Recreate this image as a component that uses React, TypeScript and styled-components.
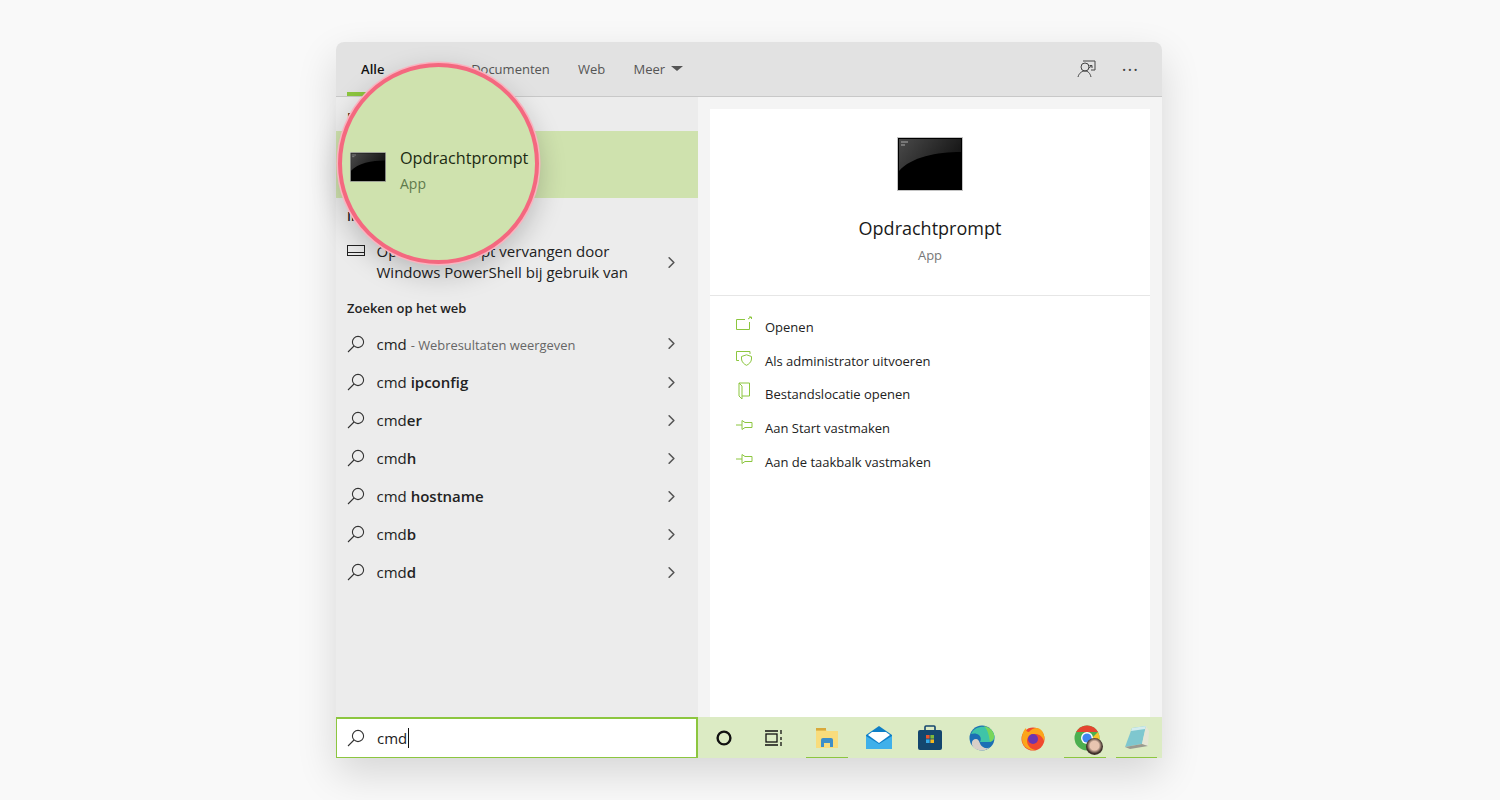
import styled, { createGlobalStyle } from "styled-components";
import { ChevronRight } from "lucide-react";

const Global = createGlobalStyle`
  html, body { margin: 0; height: 100%; background: #f9f9f9; }
  body { font-family: "Open Sans", "Noto Sans", sans-serif; color: #1c1c1c; }
`;

const SearchGlass = ({ size = 18 }: { size?: number }) => (
  <svg width={size} height={size} viewBox="0 0 18 18" fill="none" stroke="#333" strokeWidth="1.1">
    <circle cx="11" cy="7" r="5.6" />
    <path d="M7 11 L1 17" />
  </svg>
);

const Cmd = ({ w, h, id }: { w: number; h: number; id: string }) => (
  <svg width={w} height={h} viewBox="0 0 66 54">
    <defs>
      <linearGradient id={id} x1="0" y1="0" x2="1" y2="0.4">
        <stop offset="0" stopColor="#4a4a4a" />
        <stop offset="1" stopColor="#161616" />
      </linearGradient>
    </defs>
    <rect x="0.5" y="0.5" width="65" height="53" fill="#000" stroke="#c4c4c4" />
    <path d="M2 2 H64 V15 C40 15 14 20 2 34 Z" fill={`url(#${id})`} />
    <path d="M4 5 H11 M4 8 H8" stroke="#aaa" strokeWidth="1" />
  </svg>
);

const green = "#8cc63f";

const OpenIcon = () => (
  <svg width="18" height="16" viewBox="0 0 18 16" fill="none" stroke={green} strokeWidth="1">
    <path d="M10 3.5 H1.5 V13.5 H14.5 V6" />
    <path d="M13 3 L16 1 M14 1 H16.5 V3" />
  </svg>
);
const ShieldIcon = () => (
  <svg width="18" height="16" viewBox="0 0 18 16" fill="none" stroke={green} strokeWidth="1">
    <path d="M4 10.5 H1.5 V1.5 H15 V4" />
    <path d="M6.500 6.500 L11.500 4.800 L16.500 6.500 V9 C16.500 12 13.500 14.500 11.500 15.300 C9.500 14.500 6.500 12 6.500 9 Z" />
  </svg>
);
const FolderIcon = () => (
  <svg width="18" height="18" viewBox="0 0 18 18" fill="none" stroke={green} strokeWidth="1">
    <path d="M4 1 H14.5 V14 H7" />
    <path d="M4 1 L7 4 V17 L4 14 Z" />
  </svg>
);
const PinIcon = () => (
  <svg width="18" height="12" viewBox="0 0 18 12" fill="none" stroke={green} strokeWidth="1">
    <path d="M1 6 H7" />
    <path d="M7 1.5 V10.5 L10 8.5 H17 V3.5 H10 Z" />
  </svg>
);

const results = [
  { plain: "cmd", bold: " ipconfig" },
  { plain: "cmd", bold: "er" },
  { plain: "cmd", bold: "h" },
  { plain: "cmd", bold: " hostname" },
  { plain: "cmd", bold: "b" },
  { plain: "cmd", bold: "d" },
];

const actions = [
  { icon: <OpenIcon />, label: "Openen" },
  { icon: <ShieldIcon />, label: "Als administrator uitvoeren" },
  { icon: <FolderIcon />, label: "Bestandslocatie openen" },
  { icon: <PinIcon />, label: "Aan Start vastmaken" },
  { icon: <PinIcon />, label: "Aan de taakbalk vastmaken" },
];

const App = () => {
  return (
    <Page>
      <Global />
      <Win>
        <TabBar>
          <Tabs>
            <Tab $active>Alle</Tab>
            <Tab>Apps</Tab>
            <Tab>Documenten</Tab>
            <Tab>Web</Tab>
            <Tab>
              Meer <Caret />
            </Tab>
          </Tabs>
          <TabTools>
            <svg width="20" height="20" viewBox="0 0 20 20" fill="none" stroke="#444" strokeWidth="1">
              <path d="M6 2 H18 V11 H14" />
              <circle cx="8" cy="8" r="4" />
              <path d="M1 18 C2 14 5 12 8 12 C11 12 13 14 14 18" />
              <path d="M12 9 L15 6.5 M15 9 V6.5 H12.5" />
            </svg>
            <Dots>···</Dots>
          </TabTools>
        </TabBar>
        <Body>
          <Left>
            <SectionHead>Beste overeenkomst</SectionHead>
            <BestMatch />
            <SettingsHead>Instellingen</SettingsHead>
            <SettingRow>
              <IconSlot>
                <svg width="18" height="12" viewBox="0 0 18 12" fill="none" stroke="#222" strokeWidth="1">
                  <rect x="0.5" y="0.5" width="17" height="10" />
                  <path d="M0.5 7.5 H17.5" />
                </svg>
              </IconSlot>
              <SettingText>
                Opdrachtprompt vervangen door
                <br />
                Windows PowerShell bij gebruik van
              </SettingText>
              <Arrow size={19} strokeWidth={2} />
            </SettingRow>
            <WebHead>Zoeken op het web</WebHead>
            <FirstWebRow>
              <IconSlot>
                <SearchGlass />
              </IconSlot>
              <RowLabel>
                cmd <Hint>- Webresultaten weergeven</Hint>
              </RowLabel>
              <Arrow size={19} strokeWidth={2} />
            </FirstWebRow>
            {results.map((r) => (
              <WebRow key={r.plain + r.bold}>
                <IconSlot>
                  <SearchGlass />
                </IconSlot>
                <RowLabel>
                  {r.plain}
                  <b>{r.bold}</b>
                </RowLabel>
                <Arrow size={19} strokeWidth={2} />
              </WebRow>
            ))}
          </Left>
          <Right>
            <Detail>
              <DetailTop>
                <Cmd w={66} h={54} id="cmd-large" />
                <DetailTitle>Opdrachtprompt</DetailTitle>
                <DetailSub>App</DetailSub>
              </DetailTop>
              <ActionList>
                {actions.map((a) => (
                  <Action key={a.label}>
                    <ActionIcon>{a.icon}</ActionIcon>
                    {a.label}
                  </Action>
                ))}
              </ActionList>
            </Detail>
          </Right>
        </Body>
        <Bottom>
          <SearchBox>
            <IconSlot>
              <SearchGlass />
            </IconSlot>
            <SearchText>cmd</SearchText>
            <CaretLine />
          </SearchBox>
          <Taskbar>
            <TaskItem>
              <svg width="18" height="18" viewBox="0 0 18 18" fill="none" stroke="#111" strokeWidth="2.4">
                <circle cx="9" cy="9" r="6.4" />
              </svg>
            </TaskItem>
            <TaskItem>
              <svg width="24" height="18" viewBox="0 0 24 18" fill="none" stroke="#111" strokeWidth="1.3">
                <rect x="3" y="5" width="11" height="8" />
                <path d="M2 2 H15 M2 16 H15" />
                <path d="M18 1 V5 M18 8 V11 M18 13 V17" />
              </svg>
            </TaskItem>
            <TaskItem $running>
              <svg width="24" height="22" viewBox="0 0 24 22">
                <path d="M1 2 H10 L12 4 H23 V21 H1 Z" fill="#f8dc7c" />
                <rect x="1" y="1" width="10" height="2.6" fill="#d9a93a" />
                <path d="M6 20 V13 Q6 11 8 11 H16 Q18 11 18 13 V20 H15 V16 H9 V20 Z" fill="#3d8fc9" />
              </svg>
            </TaskItem>
            <TaskItem>
              <svg width="26" height="24" viewBox="0 0 26 24">
                <path d="M0 9 L13 0 L26 9 V23 H0 Z" fill="#0f7fc6" />
                <path d="M2 9 L13 17 L24 9 L20 6 H6 Z" fill="#fff" />
                <path d="M0 10 L13 18 L26 10 V23 H0 Z" fill="#3fb0ea" />
              </svg>
            </TaskItem>
            <TaskItem>
              <svg width="26" height="26" viewBox="0 0 26 26">
                <path d="M8 5 V2 Q8 1 9 1 H17 Q18 1 18 2 V5" fill="none" stroke="#14466e" strokeWidth="1.6" />
                <rect x="1" y="5" width="24" height="20" rx="2" fill="#14466e" />
                <rect x="9" y="10" width="3.6" height="3.6" fill="#e8552d" />
                <rect x="13.4" y="10" width="3.6" height="3.6" fill="#7fb93a" />
                <rect x="9" y="14.4" width="3.6" height="3.6" fill="#35a8e6" />
                <rect x="13.4" y="14.4" width="3.6" height="3.6" fill="#f4b81f" />
              </svg>
            </TaskItem>
            <TaskItem>
              <svg width="26" height="26" viewBox="0 0 26 26">
                <circle cx="13" cy="13" r="12.5" fill="#1c6fb4" />
                <path d="M2 9 C6 0 21 -1 25 9 C26.500 14 24 17 19 17 H11 C14 11 8 7 2 9 Z" fill="#3fc4a8" />
                <path d="M15 1 C20 2 24 5 25 10 C25.500 13 24 16 21 17 C20 11 19 5 15 1 Z" fill="#79d65a" />
                <path d="M5 23 C1 19 3 14 7 14 C11 14 10 20 14 22 C17 24 20 23 21 22 C16 27 9 26 5 23 Z" fill="#d8cfc8" />
              </svg>
            </TaskItem>
            <TaskItem>
              <svg width="26" height="26" viewBox="0 0 26 26">
                <circle cx="13" cy="14" r="11.5" fill="#f0492f" />
                <path d="M2 14 C2 8 4 5 6 3 C6 6 7 7 9 7 C12 3 17 2 20 4 C24 7 25 12 24 16 C22 10 18 9 15 9 C10 9 7 12 7 16 C7 21 12 25 16 25 C8 26 2 21 2 14 Z" fill="#fba51a" />
                <circle cx="13" cy="14" r="5" fill="#6a36b0" />
              </svg>
            </TaskItem>
            <TaskItem $running>
              <ChromeWrap>
                <svg width="26" height="26" viewBox="0 0 26 26">
                  <circle cx="13" cy="13" r="12.5" fill="#4caf50" />
                  <path d="M13 .5 A12.5 12.5 0 0 1 24 7 H13 Z M2.2 7 A12.5 12.5 0 0 1 13 .5 V7 Z" fill="#e5442f" />
                  <path d="M24 7 A12.5 12.5 0 0 1 13 25.5 L18 13 Z" fill="#f6c42c" />
                  <circle cx="13" cy="13" r="6" fill="#fff" />
                  <circle cx="13" cy="13" r="4.6" fill="#3f85f0" />
                </svg>
                <Avatar />
              </ChromeWrap>
            </TaskItem>
            <TaskItem $running>
              <svg width="26" height="26" viewBox="0 0 26 26">
                <path d="M8 3 L22 1 L18 19 L1 22 Z" fill="#7fc7cf" />
                <path d="M8 3 L22 1 L21 4 L7 6 Z" fill="#d4ecee" />
                <path d="M22 1 L25 6 L24 21 L18 19 Z" fill="#e6e6d6" />
                <path d="M1 22 L18 19 L24 21 L6 24 Z" fill="#9a9a90" />
              </svg>
            </TaskItem>
          </Taskbar>
        </Bottom>
        <Lens>
          <LensIcon>
            <Cmd w={36} h={30} id="cmd-small" />
          </LensIcon>
          <LensText>
            <LensTitle>Opdrachtprompt</LensTitle>
            <LensSub>App</LensSub>
          </LensText>
        </Lens>
      </Win>
    </Page>
  );
};

const Page = styled.div`
  width: 1500px;
  height: 800px;
  padding-top: 42px;
  box-sizing: border-box;
  overflow: hidden;
`;

const Win = styled.div`
  position: relative;
  width: 826px;
  height: 716px;
  margin-left: 336px;
  display: flex;
  flex-direction: column;
  border-radius: 8px 8px 0 0;
  box-shadow: 0 16px 40px rgba(0, 0, 0, 0.14);
`;

const TabBar = styled.div`
  height: 55px;
  flex: none;
  display: flex;
  justify-content: space-between;
  background: #e2e2e2;
  border-bottom: 1px solid #c8c8c8;
  border-radius: 8px 8px 0 0;
  box-sizing: border-box;
  padding-left: 11px;
`;

const Tabs = styled.div`
  display: flex;
`;

const Tab = styled.div<{ $active?: boolean }>`
  height: 100%;
  box-sizing: border-box;
  padding: 3px 14.1px 0;
  display: flex;
  align-items: center;
  gap: 5px;
  font-size: 13px;
  color: ${(p) => (p.$active ? "#111" : "#555")};
  font-weight: ${(p) => (p.$active ? 600 : 400)};
  border-bottom: 4px solid ${(p) => (p.$active ? green : "transparent")};
`;

const Caret = styled.span`
  width: 0;
  height: 0;
  border-left: 6px solid transparent;
  border-right: 6px solid transparent;
  border-top: 5.5px solid #555;
  margin-left: 1px;
`;

const TabTools = styled.div`
  display: flex;
  align-items: center;
  gap: 25px;
  padding-right: 23px;
`;

const Dots = styled.span`
  font-size: 18px;
  color: #444;
  letter-spacing: 1px;
`;

const Body = styled.div`
  flex: 1;
  min-height: 0;
  display: flex;
`;

const Left = styled.div`
  width: 362px;
  flex: none;
  background: #ececec;
  box-sizing: border-box;
  padding-top: 6px;
`;

const SectionHead = styled.div`
  height: 28px;
  padding-left: 11px;
  display: flex;
  align-items: center;
  font-size: 13px;
  font-weight: 600;
  color: #222;
`;

const SettingsHead = styled(SectionHead)`
  height: 36px;
`;

const BestMatch = styled.div`
  height: 67px;
  background: #cfe2ae;
`;

const IconSlot = styled.div`
  width: 40.5px;
  padding-left: 11px;
  box-sizing: border-box;
  flex: none;
  display: flex;
  align-items: center;
`;

const SettingRow = styled.div`
  height: 44px;
  display: flex;
  align-items: center;
  margin-top: 6px;

  ${IconSlot} {
    align-self: flex-start;
    padding-top: 5px;
  }
`;

const SettingText = styled.div`
  flex: 1;
  font-size: 15px;
  line-height: 21px;
  color: #222;
  white-space: nowrap;
`;

const Arrow = styled(ChevronRight)`
  color: #555;
  flex: none;
  margin-right: 17px;
`;

const WebHead = styled(SectionHead)`
  margin-top: 8px;
  height: 32px;
`;

const WebRow = styled.div`
  height: 38px;
  display: flex;
  align-items: center;
`;

const FirstWebRow = styled(WebRow)`
  height: 39px;
`;

const RowLabel = styled.div`
  flex: 1;
  font-size: 15px;
  color: #222;

  b {
    font-weight: 600;
  }
`;

const Hint = styled.span`
  font-size: 12.9px;
  color: #666;
`;

const Right = styled.div`
  flex: 1;
  background: #f4f4f4;
  padding: 12px 12px 0;
  display: flex;
`;

const Detail = styled.div`
  flex: 1;
  background: #fff;
`;

const DetailTop = styled.div`
  height: 187px;
  box-sizing: border-box;
  padding-top: 28px;
  display: flex;
  flex-direction: column;
  align-items: center;
  border-bottom: 1px solid #e6e6e6;
`;

const DetailTitle = styled.div`
  margin-top: 23px;
  font-size: 18px;
  line-height: 28px;
  color: #1a1a1a;
`;

const DetailSub = styled.div`
  margin-top: 4px;
  font-size: 13px;
  color: #777;
`;

const ActionList = styled.div`
  padding: 14px 0 0 25px;
`;

const Action = styled.div`
  height: 33.8px;
  display: flex;
  align-items: center;
  font-size: 13px;
  color: #222;
`;

const ActionIcon = styled.span`
  width: 30px;
  flex: none;
  display: flex;
  margin-top: -6px;
`;

const Bottom = styled.div`
  height: 41px;
  flex: none;
  display: flex;
`;

const SearchBox = styled.div`
  width: 361.5px;
  flex: none;
  box-sizing: border-box;
  background: #fff;
  border: 2px solid ${green};
  border-width: 2px 2px 1px 1px;
  display: flex;
  align-items: center;

  ${IconSlot} {
    width: 40px;
    padding-left: 10px;
  }
`;

const SearchText = styled.span`
  font-size: 15px;
  color: #222;
`;

const CaretLine = styled.span`
  width: 1px;
  height: 20px;
  background: #111;
  margin-left: 1px;
`;

const Taskbar = styled.div`
  flex: 1;
  background: #dcebc4;
  display: flex;
  padding-left: 0.5px;
`;

const TaskItem = styled.div<{ $running?: boolean }>`
  position: relative;
  width: 51.6px;
  flex: none;
  display: flex;
  align-items: center;
  justify-content: center;

  svg {
    filter: blur(0.3px);
  }

  &::after {
    content: "";
    display: ${(p) => (p.$running ? "block" : "none")};
    position: absolute;
    left: 5px;
    right: 5px;
    bottom: 0;
    height: 1.5px;
    background: ${green};
  }
`;

const ChromeWrap = styled.div`
  position: relative;
  display: flex;
  margin-left: 4px;
`;

const Avatar = styled.span`
  position: absolute;
  right: -3px;
  bottom: -4px;
  width: 17px;
  height: 17px;
  border-radius: 50%;
  background: radial-gradient(circle at 50% 45%, #e8c4b0 0 35%, #3f302b 62%);
`;

const Lens = styled.div`
  position: absolute;
  left: 2px;
  top: 21px;
  width: 201px;
  height: 201px;
  box-sizing: border-box;
  border-radius: 50%;
  background: #cfe2ae;
  border: 4.5px solid #f4687f;
  box-shadow: 0 0 0 1.5px #f9b4c0, 0 10px 28px rgba(0, 0, 0, 0.22);
  display: flex;
  align-items: center;
  padding: 8px 0 0 7.5px;
`;

const LensIcon = styled.div`
  display: flex;
  margin-right: 14.5px;
  margin-top: -2px;
`;

const LensText = styled.div`
  display: flex;
  flex-direction: column;
  margin-top: 5px;
`;

const LensTitle = styled.div`
  font-size: 16.2px;
  color: #1c2a12;
  white-space: nowrap;
`;

const LensSub = styled.div`
  margin-top: 5px;
  font-size: 14px;
  color: #5f7a4c;
`;

export default App;
